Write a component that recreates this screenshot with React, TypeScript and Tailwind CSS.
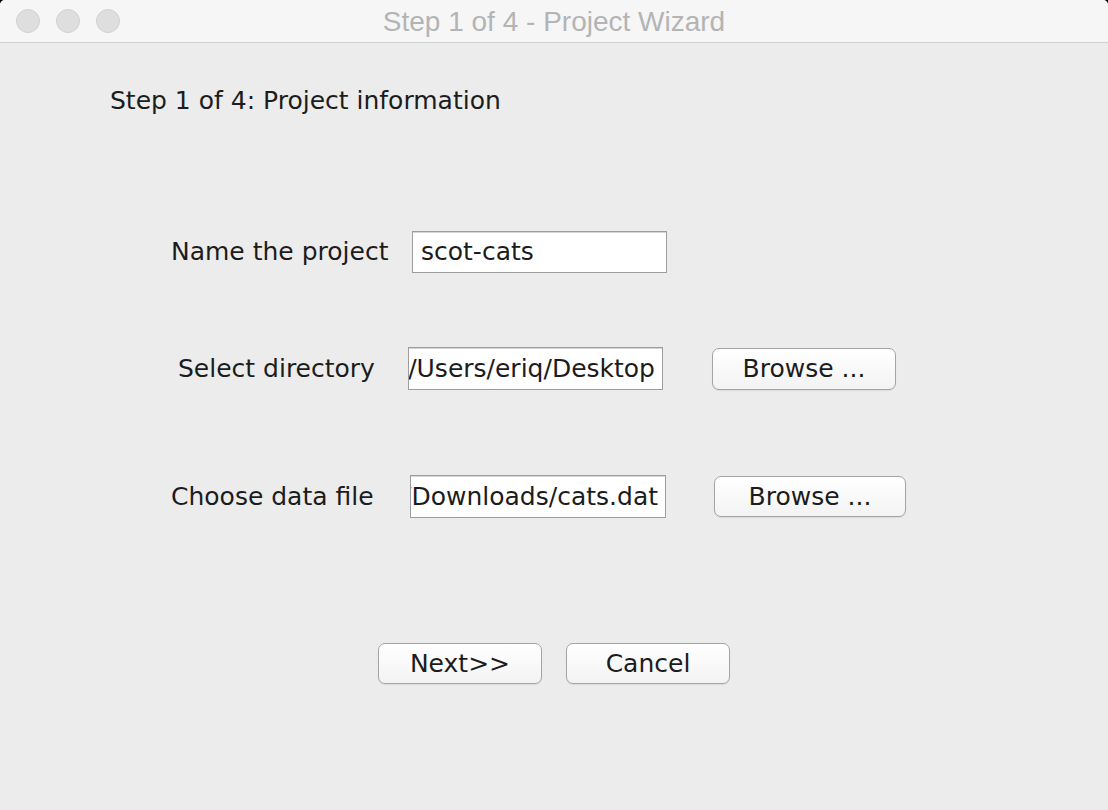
/**
 * Project Wizard, step 1 of 4
 *
 * Mac-style dialog window with project name, directory and data file fields.
 */

const ui = "font-['DejaVu_Sans',sans-serif] text-[25px] text-[#1c1c1c]";

function AquaButton({ label, className }: { label: string; className: string }) {
  return (
    <button
      className={`flex items-center justify-center rounded-[7px] border border-[#a4a4a4] bg-gradient-to-b from-white to-[#f3f3f3] shadow-[0_1px_1px_rgba(0,0,0,0.08)] ${ui} ${className}`}
    >
      {label}
    </button>
  );
}

function Field({ value, className }: { value: string; className: string }) {
  // path fields are scrolled to the end, so the start gets clipped
  return (
    <div
      className={`flex items-center justify-end overflow-hidden whitespace-nowrap border border-[#9d9d9d] bg-white pr-[7px] pl-[4px] shadow-[inset_0_1px_0_#d6d6d6] ${ui} ${className}`}
    >
      <span className="shrink-0">{value}</span>
    </div>
  );
}

export default function App() {
  return (
    <div className="h-[810px] w-[1108px] bg-black">
      <div className="flex h-full flex-col overflow-hidden rounded-t-[5px] bg-[#ececec]">
        {/* Title bar */}
        <div className="relative flex h-[43px] shrink-0 items-center border-b border-[#cfcfcf] bg-[#f6f6f6]">
          <div className="flex items-center gap-[16px] pl-[16px]">
            <span className="h-[24px] w-[24px] rounded-full border border-[#d2d2d2] bg-[#dedede]" />
            <span className="h-[24px] w-[24px] rounded-full border border-[#d2d2d2] bg-[#dedede]" />
            <span className="h-[24px] w-[24px] rounded-full border border-[#d2d2d2] bg-[#dedede]" />
          </div>
          <div className="absolute inset-0 flex items-center justify-center pt-[2px] font-['Liberation_Sans',sans-serif] text-[28px] text-[#b4b4b4]">
            Step 1 of 4 - Project Wizard
          </div>
        </div>

        {/* Heading */}
        <div className={`mt-[43px] h-[30px] pl-[110px] leading-[30px] ${ui}`}>
          Step 1 of 4: Project information
        </div>

        {/* Name */}
        <div className="mt-[115px] flex h-[42px] items-center pl-[171px]">
          <div className={`w-[241px] ${ui}`}>Name the project</div>
          <div
            className={`flex h-[42px] w-[255px] items-center border border-[#9d9d9d] bg-white pl-[8px] shadow-[inset_0_1px_0_#d6d6d6] ${ui}`}
          >
            scot-cats
          </div>
        </div>

        {/* Directory */}
        <div className="mt-[74px] flex h-[43px] items-center pl-[178px]">
          <div className={`w-[230px] ${ui}`}>Select directory</div>
          <Field value="/Users/eriq/Desktop" className="h-[43px] w-[255px]" />
          <AquaButton label="Browse ..." className="ml-[49px] h-[42px] w-[184px]" />
        </div>

        {/* Data file */}
        <div className="mt-[85px] flex h-[43px] items-center pl-[171px]">
          <div className={`w-[239px] ${ui}`}>Choose data file</div>
          <Field value="/Users/eriq/Downloads/cats.dat" className="h-[43px] w-[256px]" />
          <AquaButton label="Browse ..." className="ml-[48px] h-[41px] w-[192px]" />
        </div>

        {/* Actions */}
        <div className="mt-[125px] flex items-center gap-[24px] pl-[378px]">
          <AquaButton label="Next>>" className="h-[41px] w-[164px]" />
          <AquaButton label="Cancel" className="h-[41px] w-[164px]" />
        </div>
      </div>
    </div>
  );
}
